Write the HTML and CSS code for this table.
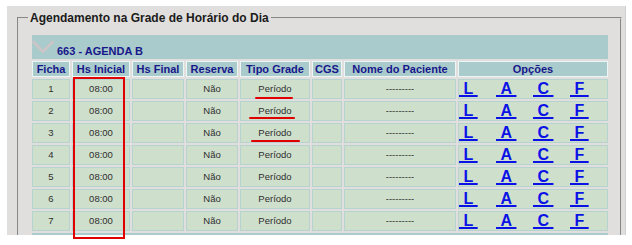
FILE: index.html
```html
<!DOCTYPE html>
<html lang="pt">
<head>
<meta charset="utf-8">
<title>Agendamento</title>
<link rel="stylesheet" href="styles.css">
</head>
<body>
<div class="page">
  <div class="panel">
    <fieldset class="box">
      <legend class="box-title">Agendamento na Grade de Horário do Dia</legend>
      <div class="grid">
        <div class="band">
          <svg class="chev" width="24" height="24" viewBox="0 0 24 24"><polyline points="1.5,7 11,16.5 20.5,7" fill="none" stroke="#cac5c7" stroke-width="3" stroke-linecap="round" stroke-linejoin="round"/></svg>
          <span class="band-title">663 - AGENDA B</span>
        </div>
        <div class="th">Ficha</div>
        <div class="th">Hs Inicial</div>
        <div class="th">Hs Final</div>
        <div class="th">Reserva</div>
        <div class="th">Tipo Grade</div>
        <div class="th">CGS</div>
        <div class="th">Nome do Paciente</div>
        <div class="th">Opções</div>

        <div class="td">1</div><div class="td">08:00</div><div class="td"></div><div class="td">Não</div><div class="td">Período</div><div class="td"></div><div class="td">---------</div>
        <div class="td opts"><a href="#">&nbsp;L&nbsp;</a><a href="#">&nbsp;A&nbsp;</a><a href="#">&nbsp;C&nbsp;</a><a href="#">&nbsp;F&nbsp;</a></div>

        <div class="td">2</div><div class="td">08:00</div><div class="td"></div><div class="td">Não</div><div class="td">Período</div><div class="td"></div><div class="td">---------</div>
        <div class="td opts"><a href="#">&nbsp;L&nbsp;</a><a href="#">&nbsp;A&nbsp;</a><a href="#">&nbsp;C&nbsp;</a><a href="#">&nbsp;F&nbsp;</a></div>

        <div class="td">3</div><div class="td">08:00</div><div class="td"></div><div class="td">Não</div><div class="td">Período</div><div class="td"></div><div class="td">---------</div>
        <div class="td opts"><a href="#">&nbsp;L&nbsp;</a><a href="#">&nbsp;A&nbsp;</a><a href="#">&nbsp;C&nbsp;</a><a href="#">&nbsp;F&nbsp;</a></div>

        <div class="td">4</div><div class="td">08:00</div><div class="td"></div><div class="td">Não</div><div class="td">Período</div><div class="td"></div><div class="td">---------</div>
        <div class="td opts"><a href="#">&nbsp;L&nbsp;</a><a href="#">&nbsp;A&nbsp;</a><a href="#">&nbsp;C&nbsp;</a><a href="#">&nbsp;F&nbsp;</a></div>

        <div class="td">5</div><div class="td">08:00</div><div class="td"></div><div class="td">Não</div><div class="td">Período</div><div class="td"></div><div class="td">---------</div>
        <div class="td opts"><a href="#">&nbsp;L&nbsp;</a><a href="#">&nbsp;A&nbsp;</a><a href="#">&nbsp;C&nbsp;</a><a href="#">&nbsp;F&nbsp;</a></div>

        <div class="td">6</div><div class="td">08:00</div><div class="td"></div><div class="td">Não</div><div class="td">Período</div><div class="td"></div><div class="td">---------</div>
        <div class="td opts"><a href="#">&nbsp;L&nbsp;</a><a href="#">&nbsp;A&nbsp;</a><a href="#">&nbsp;C&nbsp;</a><a href="#">&nbsp;F&nbsp;</a></div>

        <div class="td">7</div><div class="td">08:00</div><div class="td"></div><div class="td">Não</div><div class="td">Período</div><div class="td"></div><div class="td">---------</div>
        <div class="td opts"><a href="#">&nbsp;L&nbsp;</a><a href="#">&nbsp;A&nbsp;</a><a href="#">&nbsp;C&nbsp;</a><a href="#">&nbsp;F&nbsp;</a></div>

        <div class="band band-next"></div>
      </div>
    </fieldset>
  </div>

  <div class="mark mark-box"></div>
  <div class="mark mark-line mark-line-1"></div>
  <div class="mark mark-line mark-line-2"></div>
  <div class="mark mark-line mark-line-3"></div>
</div>
</body>
</html>
```
FILE: styles.css
```css
html, body {
  margin: 0;
  padding: 0;
  background: #ffffff;
}

body {
  font-family: "Liberation Sans", Arial, sans-serif;
}

.page {
  position: relative;
  width: 632px;
  height: 245px;
  overflow: hidden;
  padding-top: 6px;
  box-sizing: border-box;
}

.panel {
  margin-left: 7px;
  width: 619px;
  height: 229px;
  background: #e0dfdd;
  overflow: hidden;
  box-sizing: border-box;
  border-right: 1px solid #cfcfcd;
}

.box {
  margin: 5px 3px 0 10px;
  padding: 10px 10px 0 13px;
  border: 2px groove #dcdcdc;
  min-width: 0;
}

.box-title {
  margin-left: -4px;
  padding: 0 2px;
  font-size: 12px;
  line-height: 14px;
  font-weight: bold;
  color: #1b1b1b;
}

.grid {
  display: grid;
  grid-template-columns: 38px 58px 52px 52px 70px 30px 112px 150px;
  grid-template-rows: 24px 16px repeat(7, 20px) 20px;
  gap: 2px;
}

.band {
  grid-column: 1 / -1;
  background: #a9cbcb;
  display: flex;
  align-items: flex-start;
}

.chev {
  display: block;
  flex: none;
}

.band-title {
  margin-left: 1px;
  padding-top: 10px;
  font-size: 11px;
  line-height: 13px;
  font-weight: bold;
  color: #17178a;
}

.th {
  background: #a9cbcb;
  border: 1px solid #eef5f5;
  box-sizing: border-box;
  font-size: 11px;
  line-height: 14px;
  font-weight: bold;
  color: #17178a;
  text-align: center;
  white-space: nowrap;
}

.td {
  background: #cedfcc;
  border: 1px solid #b7d3d0;
  box-sizing: border-box;
  font-size: 9.5px;
  line-height: 18px;
  color: #2e2e2e;
  text-align: center;
  white-space: nowrap;
}

.opts {
  display: grid;
  grid-template-columns: repeat(4, 1fr);
  text-align: left;
}

.opts a {
  justify-self: start;
  font-size: 16px;
  line-height: 18px;
  font-weight: bold;
  color: #0b12e6;
  text-decoration: underline;
  text-decoration-thickness: 2px;
  text-underline-offset: 1px;
}

.mark {
  position: absolute;
  box-sizing: border-box;
}

.mark-box {
  left: 73px;
  top: 77px;
  width: 52px;
  height: 162px;
  border: 2px solid #e00000;
}

.mark-line {
  height: 2px;
  background: #e00000;
  border-radius: 1px;
}

.mark-line-1 { left: 255px; top: 97px; width: 38px; }
.mark-line-2 { left: 249px; top: 117px; width: 46px; }
.mark-line-3 { left: 251px; top: 140px; width: 49px; }
```
